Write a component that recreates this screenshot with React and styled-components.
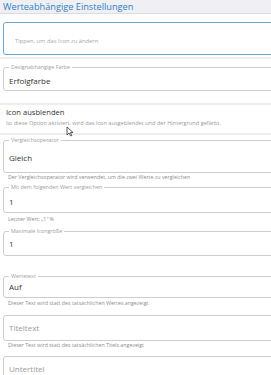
import React from "react";
import styled, { createGlobalStyle } from "styled-components";

const Global = createGlobalStyle`
  html, body { margin: 0; padding: 0; background: #ffffff; overflow: hidden; }
  body { font-family: "Open Sans", "Liberation Sans", sans-serif; color: #333; }
`;

const Page = styled.div`
  position: relative;
  width: 271px;
  height: 375px;
  overflow: hidden;
`;

const Header = styled.div`
  height: 14px;
  box-sizing: border-box;
  background: #efeff4;
  border-bottom: 1px solid #dcdce0;
  padding-left: 3px;
  display: flex;
  align-items: center;
  font-size: 9.2px;
  color: #2f7fc4;
  line-height: 1;
`;

const Body = styled.div`
  padding-left: 3px;
  margin-right: -12px;
  display: flex;
  flex-direction: column;
`;

const IconBox = styled.div`
  margin-top: 8px;
  height: 33px;
  border: 1px solid #6aa7dc;
  border-radius: 3px;
  display: flex;
  align-items: center;
  padding-left: 11px;
  padding-top: 4px;
  box-sizing: border-box;
  font-size: 5.8px;
  color: #a8a8a8;
`;

const Separator = styled.div`
  height: 2px;
  background: #eeeef0;
  margin-top: ${(p) => p.$top || 0}px;
  margin-left: -3px;
`;

const Box = styled.div`
  position: relative;
  margin-top: ${(p) => p.$top || 0}px;
  height: ${(p) => p.$h}px;
  padding: ${(p) => p.$pt || 0}px 0 0 5px;
  box-sizing: border-box;
  border: 1px solid #cdcdcd;
  border-radius: 3px;
  display: flex;
  align-items: center;
`;

const Label = styled.span`
  position: absolute;
  top: -4px;
  left: 5px;
  font-size: 5.4px;
  color: #a0a0a0;
  padding: 0 2px;
  background: #fff;
  line-height: 6px;
`;

const Value = styled.div`
  font-size: 8px;
  color: ${(p) => (p.$placeholder ? "#9a9a9a" : "#333")};
  line-height: 1;
`;

const Helper = styled.div`
  font-size: 5.3px;
  color: #8d8d8d;
  padding-left: 5px;
  margin-top: ${(p) => p.$top || 0}px;
  line-height: 6px;
`;

const ToggleBlock = styled.div`
  padding: 3px 0 7px 3px;
  display: flex;
  flex-direction: column;
  gap: 4px;
`;

const ToggleTitle = styled.div`
  font-size: 7.6px;
  color: #333;
  line-height: 8px;
`;

const ToggleDesc = styled.div`
  font-size: 5.6px;
  color: #999;
  line-height: 6px;
  white-space: nowrap;
`;

const Cursor = styled.svg`
  position: absolute;
  left: 66px;
  top: 126px;
`;

function Field({ legend, value, placeholder, helper, h, top, pt, ht }) {
  return (
    <>
      <Box $h={h} $top={top} $pt={pt}>
        {legend && <Label>{legend}</Label>}
        <Value $placeholder={!!placeholder}>{value || placeholder}</Value>
      </Box>
      {helper && <Helper $top={ht}>{helper}</Helper>}
    </>
  );
}

export default function App() {
  return (
    <Page>
      <Global />
      <Header>Werteabhängige Einstellungen</Header>
      <Body>
        <IconBox>Tippen, um das Icon zu ändern</IconBox>
        <Separator $top={2} />
        <Field legend="Designabhängige Farbe" value="Erfolgfarbe" h={24} top={8} pt={4} />
        <Separator $top={12} />
        <ToggleBlock>
          <ToggleTitle>Icon ausblenden</ToggleTitle>
          <ToggleDesc>
            Ist diese Option aktiviert, wird das Icon ausgeblendet und der Hintergrund gefärbt.
          </ToggleDesc>
        </ToggleBlock>
        <Separator />
        <Field
          legend="Vergleichsoperator"
          value="Gleich"
          h={33}
          top={5}
          pt={3}
          ht={1}
          helper="Der Vergleichsoperator wird verwendet, um die zwei Werte zu vergleichen"
        />
        <Field
          legend="Mit dem folgenden Wert vergleichen"
          value="1"
          h={26}
          top={7}
          pt={4}
          ht={3}
          helper={"Letzter Wert: \u201e1\u201c %"}
        />
        <Field legend="Maximale Icongröße" value="1" h={25} top={9} />
        <Field
          legend="Wertetext"
          value="Auf"
          h={22}
          top={20}
          ht={2}
          helper="Dieser Text wird statt des tatsächlichen Wertes angezeigt"
        />
        <Field
          placeholder="Titeltext"
          h={26}
          top={9}
          ht={1}
          helper="Dieser Text wird statt des tatsächlichen Titels angezeigt"
        />
        <Field placeholder="Untertitel" h={26} top={8} />
      </Body>
      <Cursor width="8" height="11" viewBox="0 0 8 11">
        <path d="M1 1 L1 9 L3 7 L4.6 10 L5.8 9.4 L4.3 6.6 L7 6.5 Z" fill="#fff" stroke="#333" strokeWidth="0.8" />
      </Cursor>
    </Page>
  );
}
